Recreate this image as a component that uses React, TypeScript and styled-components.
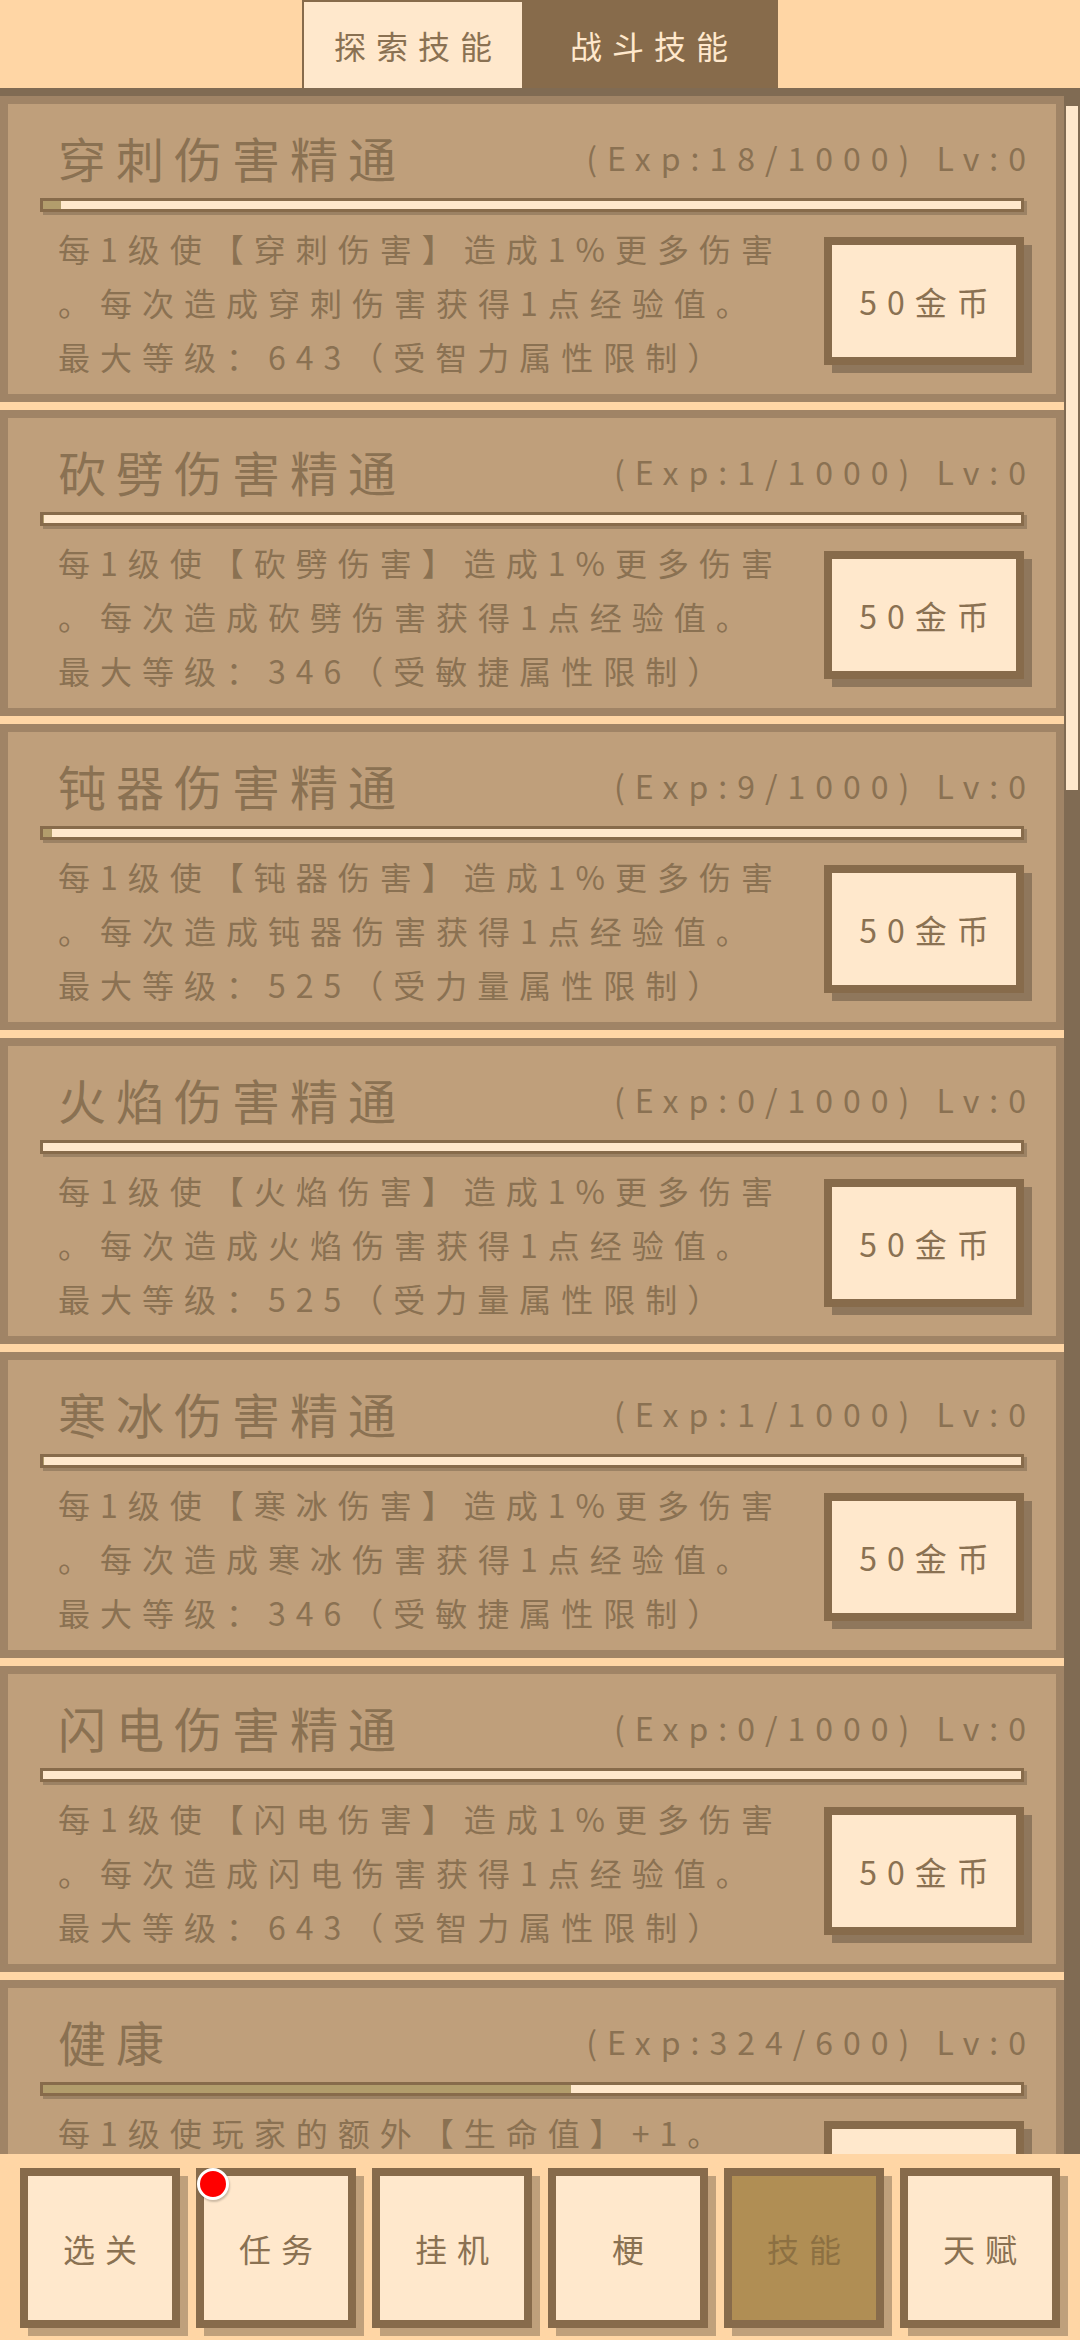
import React from "react";
import styled, { createGlobalStyle } from "styled-components";

const C = {
  peach: "#FFD6A5",
  cream: "#FFE8CC",
  dark: "#876B4B",
  frame: "#806B53",
  cardBorder: "#A08466",
  cardBg: "#BF9F7B",
  fill: "#B29D6C",
  active: "#B08E54",
  text: "#8A7152",
};

const GlobalStyle = createGlobalStyle`
  html, body {
    margin: 0;
    padding: 0;
    background: ${C.peach};
  }
  body {
    font-family: "Noto Sans CJK SC", "Noto Sans", sans-serif;
  }
  * { box-sizing: border-box; }
`;

const Screen = styled.div`
  width: 1080px;
  height: 2340px;
  display: flex;
  flex-direction: column;
  overflow: hidden;
  background: ${C.peach};
`;

const TopBar = styled.div`
  height: 88px;
  flex-shrink: 0;
  display: flex;
  justify-content: center;
  align-items: flex-start;
`;

const TabGroup = styled.div`
  display: flex;
  border: 2px solid ${C.dark};
  border-bottom: none;
`;

const Tab = styled.div<{ $active?: boolean; $w: number }>`
  width: ${(p) => p.$w}px;
  height: 86px;
  display: flex;
  align-items: center;
  justify-content: center;
  padding-left: 10px;
  font-size: 32px;
  letter-spacing: 10px;
  background: ${(p) => (p.$active ? C.dark : C.cream)};
  color: ${(p) => (p.$active ? C.cream : C.text)};
`;

const ScrollArea = styled.div`
  flex: 1;
  min-height: 0;
  display: flex;
  border-top: 8px solid ${C.frame};
  overflow: hidden;
`;

const List = styled.div`
  flex: 1;
  min-width: 0;
  display: flex;
  flex-direction: column;
  gap: 8px;
  overflow: hidden;
`;

const Track = styled.div`
  width: 16px;
  flex-shrink: 0;
  background: ${C.frame};
  padding: 10px 2px;
`;

const Thumb = styled.div`
  height: 684px;
  background: ${C.cream};
`;

const Card = styled.div`
  flex-shrink: 0;
  border: 8px solid ${C.cardBorder};
  background: ${C.cardBg};
  padding: 16px 32px 11px;
  color: ${C.text};
`;

const Header = styled.div`
  height: 74px;
  display: flex;
  align-items: center;
  justify-content: space-between;
  padding-left: 18px;
  margin-right: -12px;
`;

const Title = styled.div`
  font-size: 48px;
  letter-spacing: 10px;
  line-height: 1;
`;

const Exp = styled.div`
  font-size: 32px;
  letter-spacing: 10px;
  line-height: 1;
`;

const Bar = styled.div`
  margin-top: 4px;
  height: 14px;
  border: 3px solid ${C.dark};
  background: ${C.cream};
  box-shadow: 3px 3px 0 rgba(0, 0, 0, 0.18);
`;

const BarFill = styled.div`
  height: 100%;
  background: ${C.fill};
`;

const Body = styled.div`
  margin-top: 9px;
  display: flex;
  align-items: flex-start;
  justify-content: space-between;
  padding-left: 18px;
`;

const Desc = styled.div`
  font-size: 32px;
  letter-spacing: 10px;
  line-height: 54px;
`;

const DescLine = styled.div`
  white-space: nowrap;
`;

const BuyButton = styled.button`
  flex-shrink: 0;
  margin-top: 16px;
  width: 200px;
  height: 128px;
  border: 8px solid ${C.dark};
  background: ${C.cream};
  box-shadow: 8px 8px 0 rgba(0, 0, 0, 0.25);
  font-family: inherit;
  font-size: 32px;
  letter-spacing: 10px;
  padding: 0 0 0 10px;
  color: ${C.text};
  display: flex;
  align-items: center;
  justify-content: center;
  cursor: pointer;
`;

const BottomNav = styled.div`
  height: 186px;
  flex-shrink: 0;
  background: ${C.peach};
  display: flex;
  gap: 16px;
  padding: 14px 20px 0;
`;

const NavButton = styled.button<{ $active?: boolean }>`
  position: relative;
  width: 160px;
  height: 160px;
  border: 8px solid ${C.dark};
  background: ${(p) => (p.$active ? C.active : C.cream)};
  box-shadow: 8px 8px 0 rgba(0, 0, 0, 0.25);
  font-family: inherit;
  font-size: 32px;
  letter-spacing: 10px;
  padding: 0 0 0 10px;
  color: ${(p) => (p.$active ? "#8C7042" : C.text)};
  display: flex;
  align-items: center;
  justify-content: center;
  cursor: pointer;
`;

const Badge = styled.span`
  position: absolute;
  top: -8px;
  left: -7px;
  width: 32px;
  height: 32px;
  border-radius: 50%;
  background: #ff0000;
  border: 3px solid #ffffff;
  box-shadow: 1px 2px 2px rgba(0, 0, 0, 0.2);
`;

type Skill = {
  name: string;
  exp: number;
  max: number;
  lines: string[];
};

const mastery = (kind: string, exp: number, cap: number, attr: string): Skill => ({
  name: `${kind}伤害精通`,
  exp,
  max: 1000,
  lines: [
    `每1级使【${kind}伤害】造成1%更多伤害`,
    `。每次造成${kind}伤害获得1点经验值。`,
    `最大等级：${cap}（受${attr}属性限制）`,
  ],
});

const skills: Skill[] = [
  mastery("穿刺", 18, 643, "智力"),
  mastery("砍劈", 1, 346, "敏捷"),
  mastery("钝器", 9, 525, "力量"),
  mastery("火焰", 0, 525, "力量"),
  mastery("寒冰", 1, 346, "敏捷"),
  mastery("闪电", 0, 643, "智力"),
  {
    name: "健康",
    exp: 324,
    max: 600,
    lines: ["每1级使玩家的额外【生命值】+1。"],
  },
];

const navItems = [
  { label: "选关" },
  { label: "任务", badge: true },
  { label: "挂机" },
  { label: "梗" },
  { label: "技能", active: true },
  { label: "天赋" },
];

function SkillCard({ skill }: { skill: Skill }) {
  const pct = (skill.exp / skill.max) * 100;
  return (
    <Card>
      <Header>
        <Title>{skill.name}</Title>
        <Exp>
          (Exp:{skill.exp}/{skill.max}) Lv:0
        </Exp>
      </Header>
      <Bar>
        <BarFill style={{ width: `${pct}%` }} />
      </Bar>
      <Body>
        <Desc>
          {skill.lines.map((l, i) => (
            <DescLine key={i}>{l}</DescLine>
          ))}
        </Desc>
        <BuyButton>50金币</BuyButton>
      </Body>
    </Card>
  );
}

export default function App() {
  return (
    <>
      <GlobalStyle />
      <Screen>
        <TopBar>
          <TabGroup>
            <Tab $w={218}>探索技能</Tab>
            <Tab $w={254} $active>
              战斗技能
            </Tab>
          </TabGroup>
        </TopBar>
        <ScrollArea>
          <List>
            {skills.map((s) => (
              <SkillCard key={s.name} skill={s} />
            ))}
          </List>
          <Track>
            <Thumb />
          </Track>
        </ScrollArea>
        <BottomNav>
          {navItems.map((n) => (
            <NavButton key={n.label} $active={n.active}>
              {n.badge && <Badge />}
              {n.label}
            </NavButton>
          ))}
        </BottomNav>
      </Screen>
    </>
  );
}
